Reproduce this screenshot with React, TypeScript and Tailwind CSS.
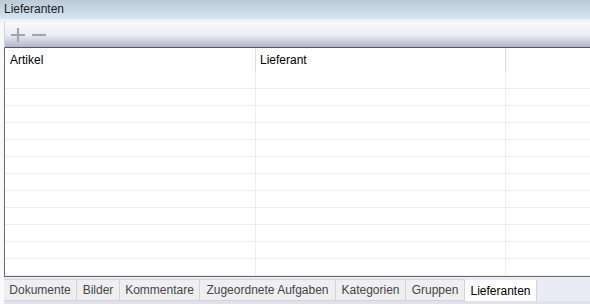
import React from 'react';

const tabs = [
  { name: 'Dokumente', w: 'w-[73px]' },
  { name: 'Bilder', w: 'w-[43px]' },
  { name: 'Kommentare', w: 'w-[80px]' },
  { name: 'Zugeordnete Aufgaben', w: 'w-[136px]' },
  { name: 'Kategorien', w: 'w-[70px]' },
  { name: 'Gruppen', w: 'w-[59px]' },
];

const rows = Array.from({ length: 12 }, (_, i) => i);

const App: React.FC = () => {
  return (
    <div
      className="w-[590px] h-[304px] flex flex-col bg-[#f8f9fb] overflow-hidden text-[12px] text-[#1b1b22]"
      style={{ fontFamily: '"Liberation Sans", Arial, sans-serif' }}
    >
      {/* Title */}
      <div className="h-[19px] shrink-0 bg-gradient-to-b from-[#bccad8] to-[#d7e5f3] pl-[4px] leading-[19px]">
        Lieferanten
      </div>
      <div className="h-[3px] shrink-0 bg-[#eef2f8]"></div>

      <div className="flex flex-col ml-[4px] flex-1 min-h-0">
        {/* Toolbar */}
        <div className="h-[26px] shrink-0 flex items-center gap-[5px] pl-[5px] border-l border-[#d0d2dc] border-b border-b-[#55555c] bg-gradient-to-b from-[#f8f9fd] via-[#eceef5] to-[#b3b4ca]">
          <svg width="16" height="16" viewBox="0 0 16 16">
            <path d="M8 1v14M1 8h14" stroke="#a3a4ad" strokeWidth="2.2" fill="none" />
          </svg>
          <svg width="16" height="16" viewBox="0 0 16 16">
            <path d="M1 8h14" stroke="#a3a4ad" strokeWidth="2.2" fill="none" />
          </svg>
        </div>

        {/* Grid */}
        <div className="flex flex-col bg-white border-l border-b border-[#6a6a6a] h-[229px] shrink-0">
          <div className="flex h-[24px] shrink-0">
            <div className="w-[251px] border-r border-[#dedede] pl-[5px] leading-[25px] text-black">Artikel</div>
            <div className="w-[250px] border-r border-[#dedede] pl-[4px] leading-[25px] text-black">Lieferant</div>
            <div className="flex-1"></div>
          </div>
          {rows.map((r) => (
            <div key={r} className="flex h-[17px] shrink-0 border-b border-[#ededed]">
              <div className="w-[251px] border-r border-[#ededed]"></div>
              <div className="w-[250px] border-r border-[#ededed]"></div>
              <div className="flex-1"></div>
            </div>
          ))}
        </div>

        {/* Tabs */}
        <div className="flex items-start h-[24px] shrink-0 pt-[2px] bg-[#e9ecf7] text-[#45454a]">
          {tabs.map((t) => (
            <div
              key={t.name}
              className={`${t.w} h-[22px] shrink-0 flex items-center justify-center bg-[#efefef] border-r border-[#d4d4d8] border-t border-b`}
            >
              {t.name}
            </div>
          ))}
          <div className="w-[72px] h-[21px] mt-[1px] shrink-0 flex items-center justify-center bg-white border-r border-[#d4d4d8] text-black">
            Lieferanten
          </div>
        </div>
        <div className="flex-1 bg-[#dfe2ea]"></div>
      </div>
    </div>
  );
};

export default App;
